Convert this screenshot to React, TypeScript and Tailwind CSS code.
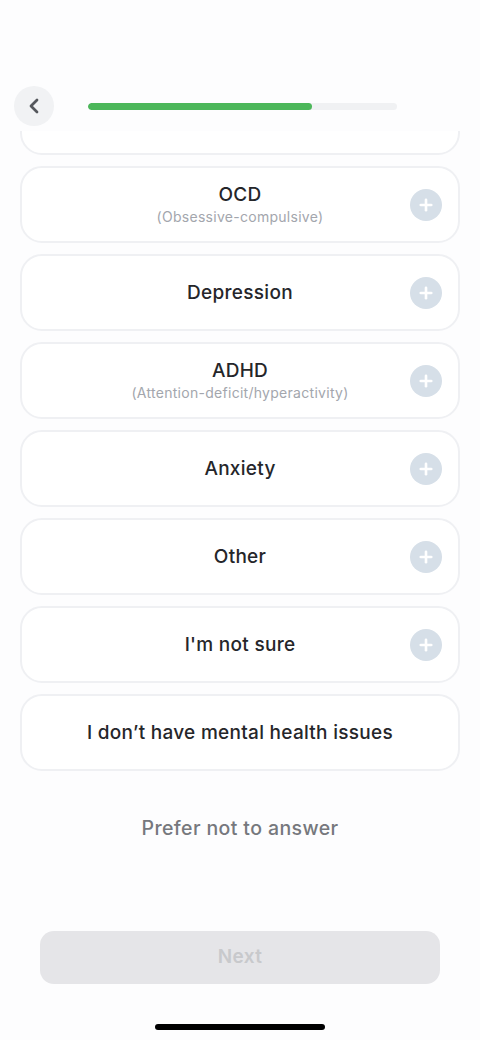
import { ChevronLeft, Plus } from "lucide-react";

const options = [
  { title: "OCD", sub: "(Obsessive-compulsive)", plus: true },
  { title: "Depression", plus: true },
  { title: "ADHD", sub: "(Attention-deficit/hyperactivity)", plus: true },
  { title: "Anxiety", plus: true },
  { title: "Other", plus: true },
  { title: "I'm not sure", plus: true },
  { title: "I don\u2019t have mental health issues", plus: false },
];

function OptionCard({ title, sub, plus }: { title: string; sub?: string; plus: boolean }) {
  return (
    <div className="relative flex h-[77px] flex-col items-center justify-center rounded-[22px] border-2 border-[#eff0f3] bg-white">
      <p className="text-[19px] font-medium leading-6 tracking-[0.015em] text-[#25262a]">{title}</p>
      {sub && <p className="text-[14px] leading-5 tracking-[0.02em] text-[#a3a6ad]">{sub}</p>}
      {plus && (
        <span className="absolute right-[16px] top-1/2 flex h-[32px] w-[32px] -translate-y-1/2 items-center justify-center rounded-full bg-[#d6dfe8]">
          <Plus className="h-[18px] w-[18px] text-white" strokeWidth={3.5} />
        </span>
      )}
    </div>
  );
}

export default function App() {
  return (
    <div className="flex h-[1040px] w-[480px] flex-col bg-[#fdfdfe] font-['Inter',sans-serif]">
      <div className="flex items-center px-[14px] pt-[86px]">
        <button
          type="button"
          className="flex h-[40px] w-[40px] items-center justify-center rounded-full bg-[#f1f2f4] text-[#55575c]"
        >
          <ChevronLeft className="h-[24px] w-[24px]" strokeWidth={2.75} />
        </button>
        <div className="ml-[34px] h-[7px] w-[309px] overflow-hidden rounded-full bg-[#f0f1f3]">
          <div className="h-full w-[224px] rounded-full bg-[#4cb75a]" />
        </div>
      </div>

      <div className="mt-[5px] h-[800px] overflow-hidden">
        <div className="-mt-[53px] flex flex-col gap-[11px] px-[20px]">
          <div className="h-[77px] rounded-[22px] border-2 border-[#eff0f3] bg-white" />
          {options.map((o) => (
            <OptionCard key={o.title} {...o} />
          ))}
          <p className="mt-[32px] text-center text-[19.5px] font-medium tracking-[0.02em] text-[#76787d]">
            Prefer not to answer
          </p>
        </div>
      </div>

      <div className="px-[40px]">
        <button
          type="button"
          className="h-[53px] w-full rounded-[14px] bg-[#e5e5e8] text-[19px] font-semibold tracking-[0.02em] text-[#c8c9cc]"
        >
          Next
        </button>
      </div>

      <div className="mt-[40px] flex justify-center">
        <div className="h-[6px] w-[170px] rounded-full bg-black" />
      </div>
    </div>
  );
}
